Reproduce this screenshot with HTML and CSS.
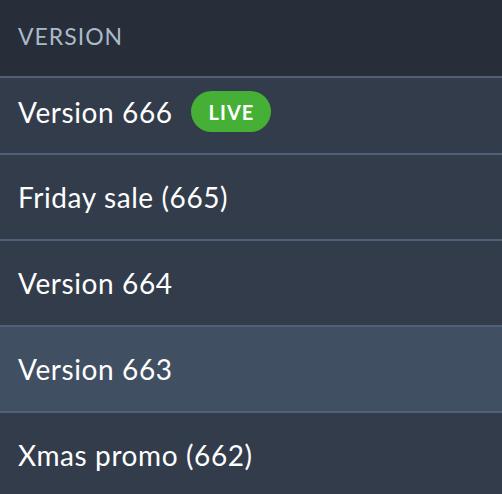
FILE: index.html
```html
<!DOCTYPE html>
<html>
<head>
<meta charset="utf-8">
<link rel="stylesheet" href="styles.css">
</head>
<body>
<div class="panel">
  <div class="header">VERSION</div>
  <ul class="list">
    <li class="item first"><span>Version 666</span><span class="badge">LIVE</span></li>
    <li class="item"><span>Friday sale (665)</span></li>
    <li class="item"><span>Version 664</span></li>
    <li class="item selected"><span>Version 663</span></li>
    <li class="item"><span>Xmas promo (662)</span></li>
  </ul>
</div>
</body>
</html>
```
FILE: styles.css
```css
html, body {
  margin: 0;
  padding: 0;
  background: #333c4b;
  overflow: hidden;
}
.panel {
  width: 502px;
  height: 494px;
  font-family: Lato, "Open Sans", sans-serif;
}
.header {
  box-sizing: border-box;
  height: 78px;
  background: #272d39;
  color: #a9bacb;
  font-size: 23px;
  letter-spacing: 1px;
  padding-left: 18px;
  padding-bottom: 4px;
  display: flex;
  align-items: center;
  border-bottom: 2px solid #50607a;
}
.list {
  list-style: none;
  margin: 0;
  padding: 0;
}
.item {
  box-sizing: border-box;
  height: 86px;
  display: flex;
  align-items: center;
  gap: 18px;
  padding-left: 18px;
  padding-bottom: 0;
  color: #ffffff;
  font-size: 28px;
  letter-spacing: 0.6px;
  border-bottom: 2px solid #50607a;
  background: #333c4b;
}
.item.first {
  height: 77px;
  padding-bottom: 8px;
}
.item.selected {
  background: #414f62;
}
.badge {
  background: #45b035;
  color: #ffffff;
  font-weight: 700;
  font-size: 20px;
  letter-spacing: 1px;
  height: 41px;
  padding: 0 17px 0 18px;
  border-radius: 21px;
  display: flex;
  align-items: center;
}
```
